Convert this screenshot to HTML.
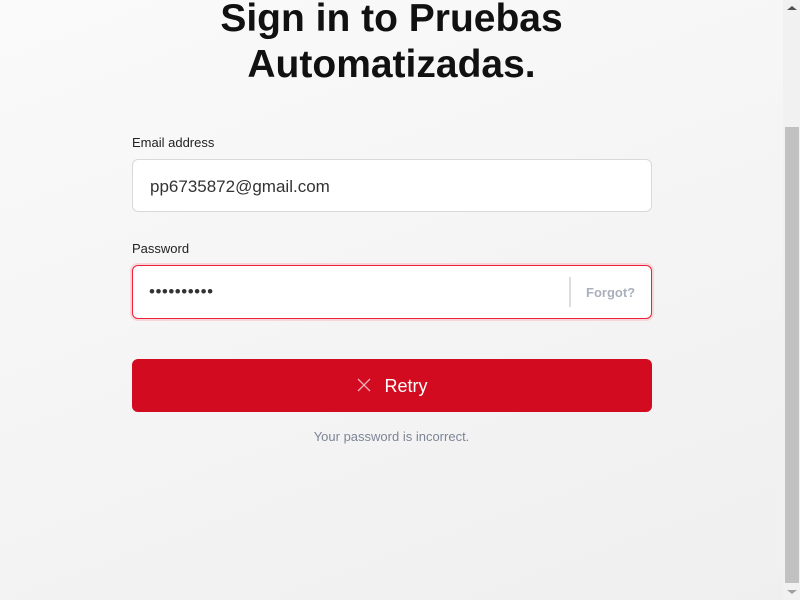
<!DOCTYPE html>
<html><head><meta charset="utf-8"><style>
html,body{margin:0;padding:0;width:800px;height:600px;overflow:hidden}
body{background:linear-gradient(160deg,#fafafa,#efefef);font-family:"Liberation Sans",sans-serif;position:relative}
h1{position:absolute;top:-4px;left:0;width:783px;text-align:center;margin:0;font-size:39px;line-height:46px;font-weight:bold;color:#111}
.lbl{position:absolute;left:132px;font-size:13px;color:#222}
.in{position:absolute;left:132px;width:518px;height:51px;background:#fff;border:1px solid #d9d9d9;border-radius:6px;box-sizing:border-box}
.btn{position:absolute;left:132px;top:359px;width:520px;height:53px;background:#d20b20;border-radius:6px;color:#fff;font-size:18px;text-align:center;line-height:55px}
.sb{position:absolute;right:0;top:0;width:17px;height:600px;background:#f1f1f1}
.th{position:absolute;left:2px;top:127px;width:14px;height:456px;background:#c1c1c1}
</style></head><body>
<h1>Sign in to Pruebas<br>Automatizadas.</h1>
<div class="lbl" style="top:135px">Email address</div>
<div class="in" style="top:159px;width:520px;height:53px"><span style="position:absolute;left:17px;top:17px;font-size:17px;color:#333">pp6735872@gmail.com</span></div>
<div class="lbl" style="top:241px">Password</div>
<div class="in" style="top:265px;width:520px;height:54px;border:1.5px solid #f0203a;box-shadow:0 0 0 2px #f7d6da">
<span style="position:absolute;left:16px;top:16px;font-size:17px;letter-spacing:0.5px;color:#333">••••••••••</span>
<div style="position:absolute;left:436px;top:11px;width:2px;height:30px;background:#ddd"></div>
<span style="position:absolute;left:453px;top:19px;font-size:13px;font-weight:bold;color:#aab0bb">Forgot?</span></div>
<div class="btn"><svg width="16" height="16" viewBox="0 0 16 16" style="vertical-align:-1px;margin-right:12px"><path d="M2 2L14 14M14 2L2 14" stroke="#f4b0b8" stroke-width="1.3"/></svg>Retry</div>
<div style="position:absolute;left:0;width:783px;top:429px;text-align:center;font-size:13px;color:#7d8595">Your password is incorrect.</div>
<div class="sb"><div style="position:absolute;left:4px;top:6px;border:5px solid transparent;border-bottom:4px solid #505050;border-top:0"></div><div class="th"></div><div style="position:absolute;left:4px;top:590px;border:5px solid transparent;border-top:4px solid #a0a0a0;border-bottom:0"></div></div>
</body></html>
